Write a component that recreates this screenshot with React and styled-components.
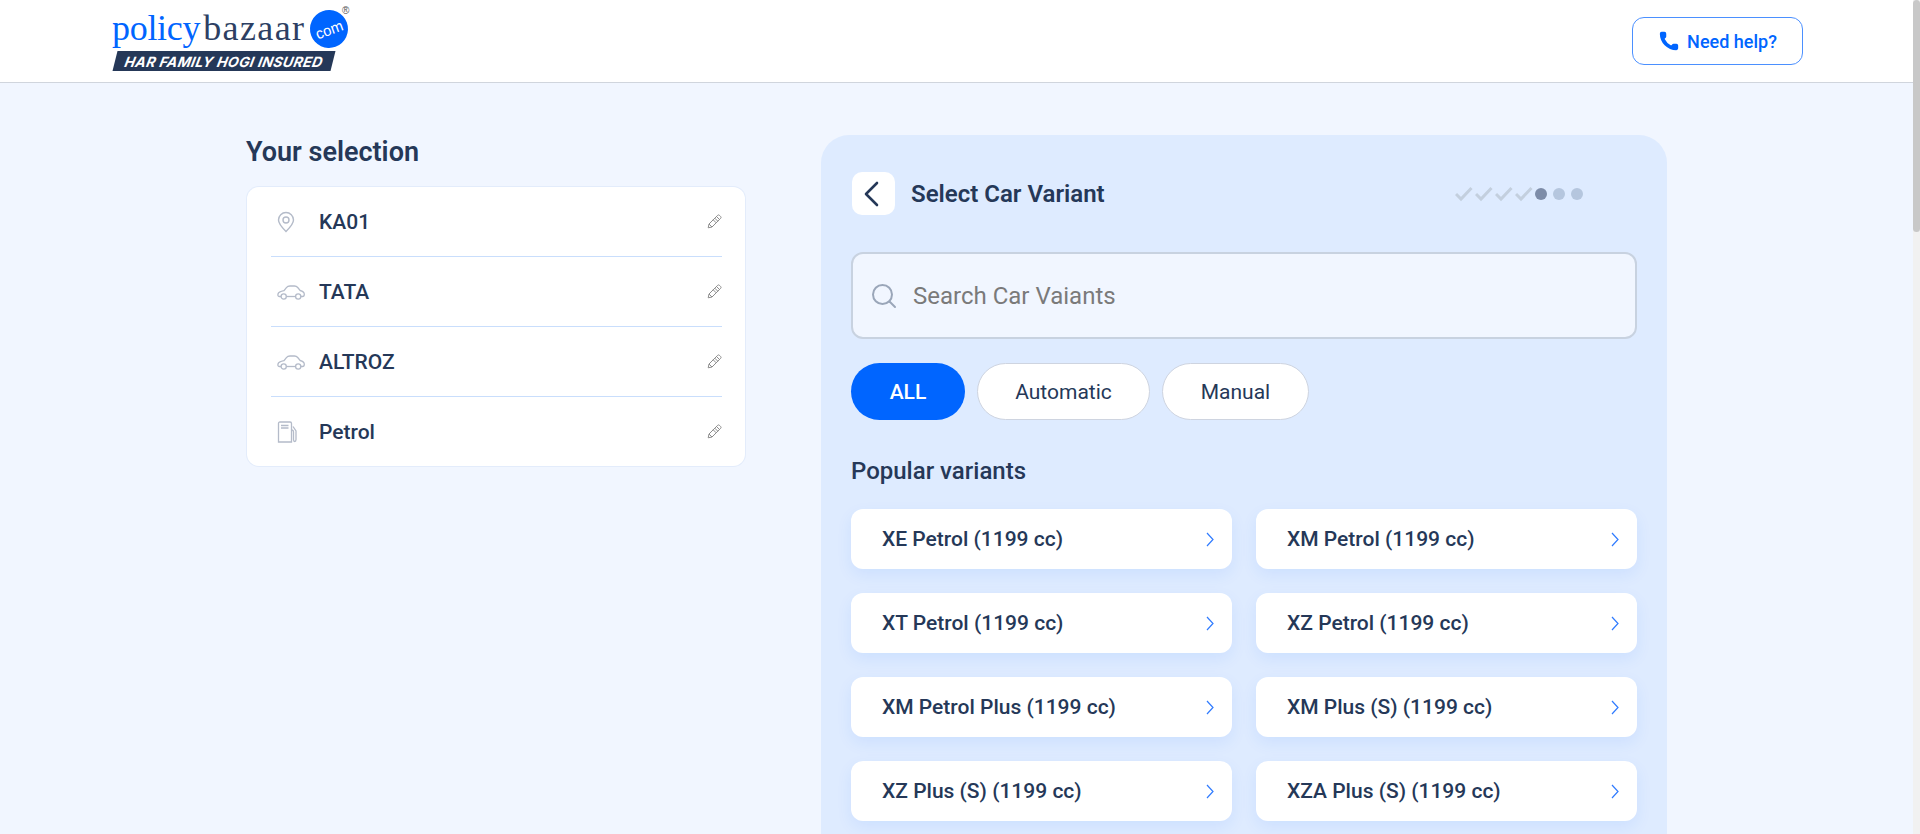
import React from "react";
import styled, {createGlobalStyle} from "styled-components";
import {Phone} from "lucide-react";

const GlobalStyle = createGlobalStyle`
    body {
        margin: 0;
        background: #f1f6ff;
        font-family: Roboto, "Liberation Sans", sans-serif;
        color: #253858;
    }
`;

const ScrollTrack = styled.div`
    position: fixed;
    top: 0;
    right: 0;
    bottom: 0;
    width: 7px;
    background: #f1f1f1;
`;

const ScrollThumb = styled.div`
    height: 232px;
    background: #c8c8c8;
    border-radius: 4px;
`;

const Header = styled.header`
    height: 82px;
    background: #fff;
    border-bottom: 1px solid #d0d5dd;
    display: flex;
    align-items: flex-start;
    justify-content: space-between;
    padding: 0 117px 0 112px;
`;

const Logo = styled.div`
    position: relative;
    width: 240px;
    padding-top: 8px;
`;

const LogoWords = styled.div`
    font-family: "Liberation Serif", serif;
    font-size: 36px;
    line-height: 40px;
    display: flex;
    color: #2d3f63;
`;

const LogoBlue = styled.span`
    color: #0065ff;
    letter-spacing: -0.3px;
    margin-right: 3px;
`;

const LogoDark = styled.span`
    letter-spacing: 1.4px;
`;

const ComBadge = styled.span`
    position: absolute;
    left: 198px;
    top: 10px;
    width: 38px;
    height: 38px;
    border-radius: 50%;
    background: #0065ff;
    color: #fff;
    font-family: "Liberation Sans", sans-serif;
    font-size: 15px;
    display: flex;
    align-items: center;
    justify-content: center;
    rotate: -20deg;
`;

const Registered = styled.span`
    position: absolute;
    left: 230px;
    top: 5px;
    font-family: "Liberation Sans", sans-serif;
    font-size: 10px;
    color: #555;
`;

const Tagline = styled.div`
    margin-top: 3px;
    width: 218px;
    height: 20px;
    margin-left: 3px;
    background: #253858;
    transform: skewX(-14deg);
    display: flex;
    align-items: center;
    justify-content: center;
`;

const TaglineText = styled.span`
    transform: skewX(2deg);
    color: #fff;
    font-family: Inter, sans-serif;
    font-style: italic;
    font-weight: 700;
    font-size: 14px;
    letter-spacing: 0.4px;
    white-space: nowrap;
`;

const HelpButton = styled.button`
    margin-top: 17px;
    width: 171px;
    height: 48px;
    border: 1px solid #4b90ff;
    border-radius: 12px;
    background: #fff;
    color: #0065ff;
    font-family: Roboto, sans-serif;
    font-size: 18px;
    font-weight: 500;
    display: flex;
    align-items: center;
    justify-content: center;
    gap: 7px;
    padding: 0;
`;

const Main = styled.main`
    display: flex;
    align-items: flex-start;
    padding: 52px 0 200px 246px;
`;

const SelectionColumn = styled.section`
    width: 499px;
    margin-right: 76px;
`;

const SelectionTitle = styled.h2`
    margin: 0 0 18px;
    font-size: 27px;
    line-height: 34px;
    font-weight: 600;
    color: #253858;
`;

const SelectionCard = styled.div`
    margin-left: 1px;
    background: #fff;
    box-shadow: 0 0 0 1px #e3ecfb;
    border-radius: 12px;
    padding: 0 23px 0 24px;
`;

const SelectionRow = styled.div`
    height: ${props => props.last ? "69px" : "70px"};
    box-sizing: border-box;
    display: flex;
    align-items: center;
    border-bottom: ${props => props.last ? "none" : "1px solid #c9defc"};
`;

const RowIcon = styled.span`
    width: 48px;
    padding-left: 6px;
    box-sizing: border-box;
    display: flex;
    align-items: center;
`;

const RowLabel = styled.span`
    flex: 1;
    font-size: 21px;
    font-weight: 500;
    color: #253858;
`;

const VariantPanel = styled.section`
    width: 846px;
    height: 1400px;
    box-sizing: border-box;
    background: #deebff;
    border-radius: 28px;
    padding: 37px 30px 0;
`;

const PanelHeader = styled.div`
    display: flex;
    align-items: center;
    height: 43px;
    margin-bottom: 37px;
`;

const BackButton = styled.button`
    width: 43px;
    height: 43px;
    border: 0;
    border-radius: 10px;
    background: #fff;
    padding: 0 4px 0 0;
    display: flex;
    align-items: center;
    justify-content: center;
    margin: 0 16px 0 1px;
`;

const PanelTitle = styled.h3`
    flex: 1;
    margin: 0;
    font-size: 24px;
    font-weight: 600;
    color: #253858;
`;

const Stepper = styled.div`
    display: flex;
    align-items: center;
    margin-right: 54px;
`;

const StepDot = styled.span`
    width: 12px;
    height: 12px;
    border-radius: 50%;
    background: ${props => props.active ? "#7d8ca8" : "#b5c6de"};

    & + & {
        margin-left: 6px;
    }
`;

const SearchBox = styled.div`
    height: 87px;
    box-sizing: border-box;
    border: 2px solid #c8d2e0;
    border-radius: 12px;
    background: #f1f6ff;
    display: flex;
    align-items: center;
    padding-left: 18px;
    gap: 16px;
    font-size: 24px;
    color: #7a7a7a;
`;

const Pills = styled.div`
    display: flex;
    gap: 12px;
    margin-top: 24px;
`;

const Pill = styled.button`
    height: 57px;
    padding: 0;
    width: ${props => props.width}px;
    border-radius: 29px;
    border: ${props => props.active ? "0" : "1px solid #ced4e0"};
    background: ${props => props.active ? "#0065ff" : "#fff"};
    color: ${props => props.active ? "#fff" : "#253858"};
    font-family: Roboto, sans-serif;
    font-size: 21px;
    font-weight: ${props => props.active ? 500 : 400};
`;

const SectionTitle = styled.h4`
    margin: 37px 0 24px;
    font-size: 24px;
    line-height: 28px;
    font-weight: 500;
    color: #253858;
`;

const VariantGrid = styled.div`
    display: grid;
    grid-template-columns: 381px 381px;
    gap: 24px;
`;

const VariantCard = styled.div`
    height: 60px;
    background: #fff;
    border-radius: 12px;
    box-shadow: 0 6px 16px rgba(0, 101, 255, 0.08);
    display: flex;
    align-items: center;
    justify-content: space-between;
    padding: 0 18px 0 31px;
    font-size: 21px;
    font-weight: 500;
    color: #253858;
`;

const PinIcon = () => (
    <svg width="18" height="22" viewBox="0 0 18 22" fill="none" stroke="#b4bbc9" strokeWidth="1.4">
        <path d="M9 20.5C5 16.5 1.5 13 1.5 9a7.5 7.5 0 0 1 15 0c0 4-3.5 7.5-7.5 11.5z"/>
        <circle cx="9" cy="9" r="3"/>
    </svg>
);

const CarIcon = () => (
    <svg width="28" height="16" viewBox="0 0 28 16" fill="none" stroke="#b4bbc9" strokeWidth="1.3">
        <path d="M4 12.5H2.2C1 12.5 .7 11.5 1 10c.3-1.500 1.500-2.600 6-3.400l2.400-3C10.400 2.300 11.300 2 13 2h4.500c1.500 0 2.300.4 3.200 1.500l2.400 3c2.600.6 4.200 1.700 4.200 3.800 0 1.500-.5 2.200-1.800 2.200H24"/>
        <path d="M9.500 12.500h9"/>
        <circle cx="6.700" cy="12.500" r="2.600"/>
        <circle cx="21.200" cy="12.500" r="2.600"/>
    </svg>
);

const FuelIcon = () => (
    <svg width="20" height="22" viewBox="0 0 20 22" fill="none" stroke="#b4bbc9" strokeWidth="1.3">
        <path d="M1.500 21V2.500C1.500 1.500 2 1 3 1h10c1 0 1.500.5 1.500 1.500V21H1.500z"/>
        <path d="M4 4.500h7.500M4 7h7.500"/>
        <path d="M14.500 9c1.500 0 2 .8 2 2v7.500c0 1 .3 2 1.200 2s1.300-1 1.300-2V10l-3-4.500"/>
    </svg>
);

const PencilIcon = () => (
    <svg width="15" height="15" viewBox="0 0 15 15" fill="none" stroke="#8d8d8d" strokeWidth="1">
        <path d="M1.200 13.800l.8-3.800L10.700 1.300c.5-.5 1.200-.5 1.700 0l1.300 1.300c.5.500.5 1.200 0 1.700L5 13z"/>
        <path d="M9.500 2.500l3 3M7.800 4.200l3 3M6.200 5.800l3 3M2 10l3 3"/>
    </svg>
);

const BackIcon = () => (
    <svg width="17" height="28" viewBox="0 0 17 28" fill="none" stroke="#253858" strokeWidth="2.6" strokeLinecap="round" strokeLinejoin="round">
        <path d="M14 3L3 14l11 11"/>
    </svg>
);

const SearchIcon = () => (
    <svg width="26" height="26" viewBox="0 0 26 26" fill="none" stroke="#9aa6b9" strokeWidth="2" strokeLinecap="round">
        <circle cx="11.500" cy="11.500" r="9.500"/>
        <path d="M18.500 18.500l5.500 5.500"/>
    </svg>
);

const CheckIcon = () => (
    <svg width="20" height="16" viewBox="0 0 20 16" fill="none" stroke="#c3cfde" strokeWidth="3" style={{display: "block"}}>
        <path d="M1 8l5 5L16.500 2"/>
    </svg>
);

const ArrowIcon = () => (
    <svg width="8" height="15" viewBox="0 0 8 15" fill="none" stroke="#2f7bff" strokeWidth="1.2">
        <path d="M1 1l6 6.500L1 14"/>
    </svg>
);

const selections = [
    {label: "KA01", Icon: PinIcon},
    {label: "TATA", Icon: CarIcon},
    {label: "ALTROZ", Icon: CarIcon},
    {label: "Petrol", Icon: FuelIcon}
];

const variants = [
    "XE Petrol (1199 cc)",
    "XM Petrol (1199 cc)",
    "XT Petrol (1199 cc)",
    "XZ Petrol (1199 cc)",
    "XM Petrol Plus (1199 cc)",
    "XM Plus (S) (1199 cc)",
    "XZ Plus (S) (1199 cc)",
    "XZA Plus (S) (1199 cc)"
];

const App = () => (
    <>
        <GlobalStyle/>
        <Header>
            <Logo>
                <LogoWords><LogoBlue>policy</LogoBlue><LogoDark>bazaar</LogoDark></LogoWords>
                <ComBadge>com</ComBadge>
                <Registered>®</Registered>
                <Tagline><TaglineText>HAR FAMILY HOGI INSURED</TaglineText></Tagline>
            </Logo>
            <HelpButton><Phone size={22} fill="#0065ff" strokeWidth={0}/>Need help?</HelpButton>
        </Header>
        <Main>
            <SelectionColumn>
                <SelectionTitle>Your selection</SelectionTitle>
                <SelectionCard>
                    {selections.map(({label, Icon}, i) => (
                        <SelectionRow key={label} last={i === selections.length - 1}>
                            <RowIcon><Icon/></RowIcon>
                            <RowLabel>{label}</RowLabel>
                            <PencilIcon/>
                        </SelectionRow>
                    ))}
                </SelectionCard>
            </SelectionColumn>
            <VariantPanel>
                <PanelHeader>
                    <BackButton><BackIcon/></BackButton>
                    <PanelTitle>Select Car Variant</PanelTitle>
                    <Stepper>
                        <CheckIcon/><CheckIcon/><CheckIcon/><CheckIcon/>
                        <StepDot active/><StepDot/><StepDot/>
                    </Stepper>
                </PanelHeader>
                <SearchBox><SearchIcon/>Search Car Vaiants</SearchBox>
                <Pills>
                    <Pill active width={114}>ALL</Pill>
                    <Pill width={173}>Automatic</Pill>
                    <Pill width={147}>Manual</Pill>
                </Pills>
                <SectionTitle>Popular variants</SectionTitle>
                <VariantGrid>
                    {variants.map(name => (
                        <VariantCard key={name}>{name}<ArrowIcon/></VariantCard>
                    ))}
                </VariantGrid>
            </VariantPanel>
        </Main>
        <ScrollTrack><ScrollThumb/></ScrollTrack>
    </>
);

export default App;
